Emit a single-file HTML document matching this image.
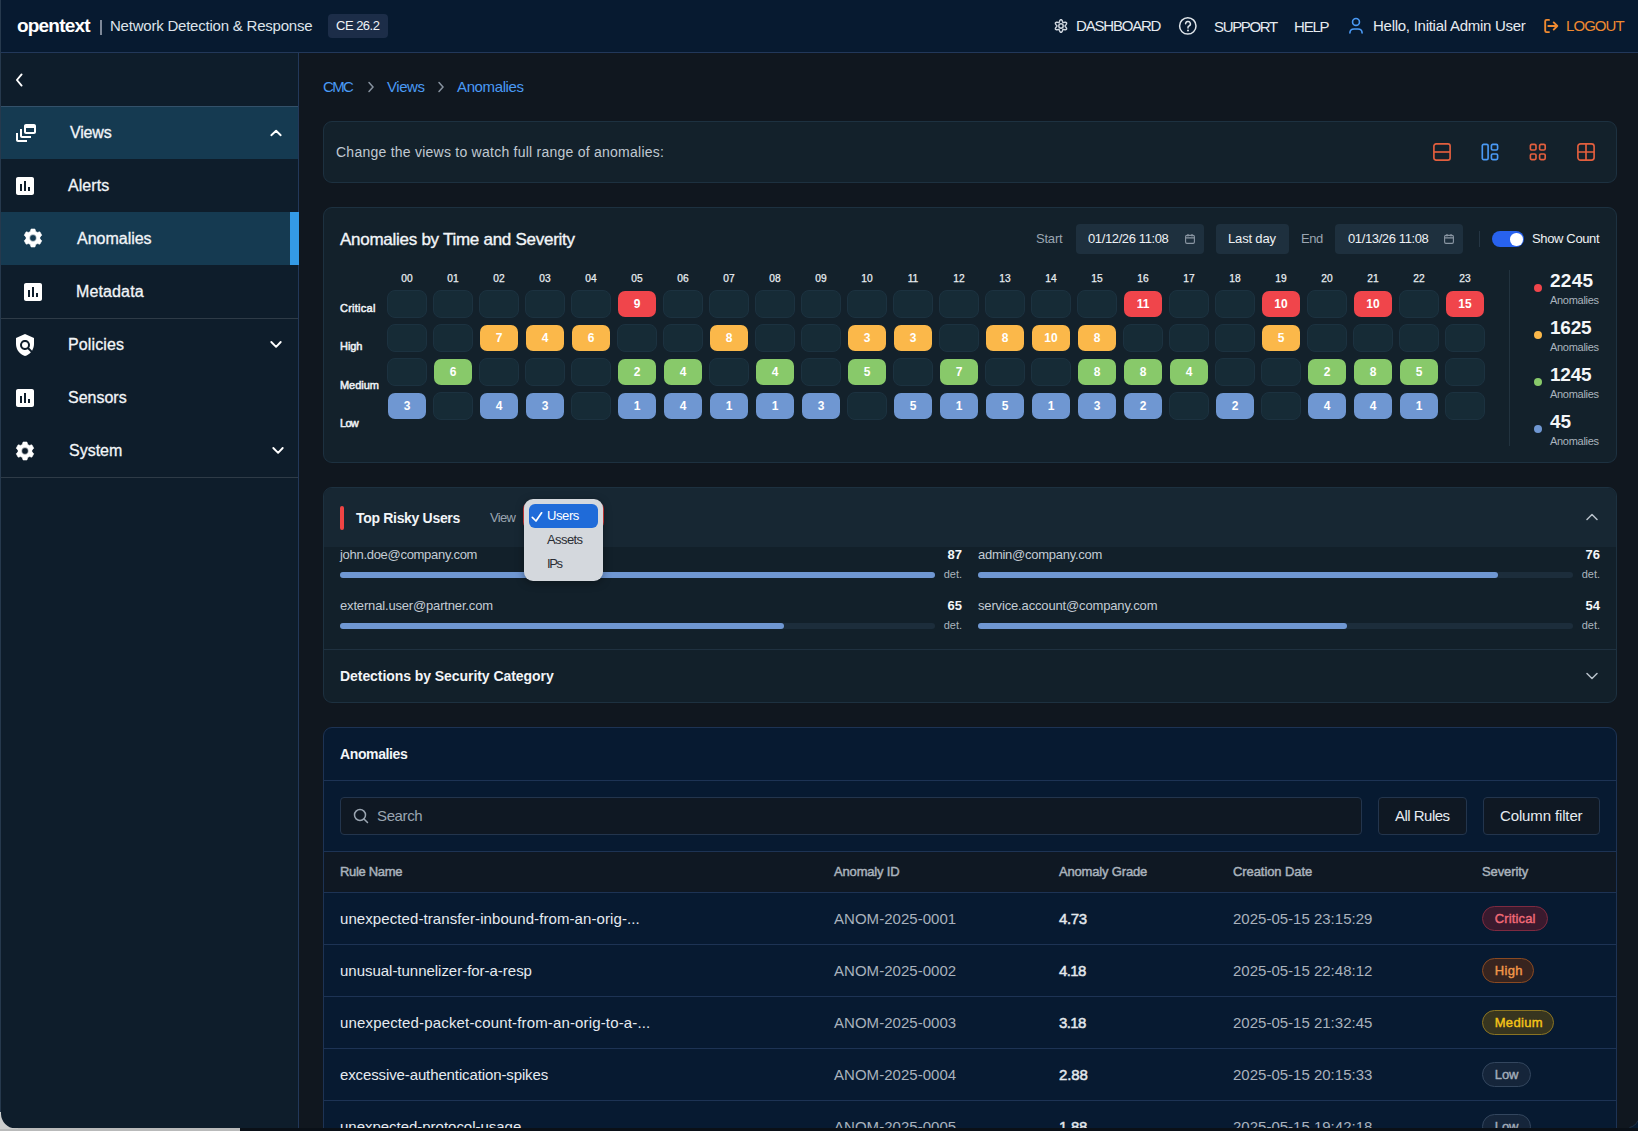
<!DOCTYPE html>
<html><head><meta charset="utf-8">
<style>
*{box-sizing:border-box;margin:0;padding:0}
html,body{width:1638px;height:1131px;overflow:hidden;background:#10171f;font-family:"Liberation Sans", sans-serif;color:#e6eaef}
.a{position:absolute}
.t{position:absolute;white-space:nowrap;line-height:1}
.cell{color:#fff;font-size:12px;font-weight:bold;text-align:center;line-height:26px}
</style></head><body>
<div class="a" style="left:0px;top:0px;width:1638px;height:52px;background:#071a30"></div>
<div class="a" style="left:0px;top:52px;width:1638px;height:1px;background:#22385a"></div>
<div class="t" id="t0" style="left:17px;top:16px;font-size:19px;color:#ffffff;font-weight:bold;letter-spacing:-0.807px;">opentext</div>
<div class="a" style="left:100px;top:20px;width:1.5px;height:15px;background:#7d8898"></div>
<div class="t" id="t1" style="left:110px;top:18px;font-size:15px;color:#dde3ea;font-weight:normal;letter-spacing:-0.218px;">Network Detection &amp; Response</div>
<div class="a" style="left:328px;top:14px;width:60px;height:24px;background:#1c2d48;border-radius:4px"></div>
<div class="t" id="t2" style="left:336px;top:19px;font-size:13px;color:#f0f3f6;font-weight:normal;letter-spacing:-0.507px;">CE 26.2</div>
<svg class="a" style="left:1053px;top:18px" width="16" height="16" viewBox="0 0 16 16"><path d="M12.05 8.00 L12.10 8.21 L12.25 8.45 L12.47 8.71 L12.74 9.01 L13.02 9.35 L13.28 9.72 L13.49 10.11 L13.60 10.49 L13.61 10.86 L13.50 11.17 L13.28 11.43 L12.96 11.60 L12.57 11.70 L12.13 11.72 L11.68 11.68 L11.24 11.60 L10.85 11.52 L10.51 11.45 L10.24 11.44 L10.03 11.51 L9.86 11.66 L9.74 11.90 L9.62 12.22 L9.50 12.61 L9.35 13.02 L9.16 13.43 L8.92 13.80 L8.64 14.10 L8.33 14.29 L8.00 14.35 L7.67 14.29 L7.36 14.10 L7.08 13.80 L6.84 13.43 L6.65 13.02 L6.50 12.61 L6.38 12.22 L6.26 11.90 L6.14 11.66 L5.98 11.51 L5.76 11.44 L5.49 11.45 L5.15 11.52 L4.76 11.60 L4.32 11.68 L3.87 11.72 L3.43 11.70 L3.04 11.60 L2.72 11.43 L2.50 11.17 L2.39 10.86 L2.40 10.49 L2.51 10.11 L2.72 9.72 L2.98 9.35 L3.26 9.01 L3.53 8.71 L3.75 8.45 L3.90 8.21 L3.95 8.00 L3.90 7.79 L3.75 7.55 L3.53 7.29 L3.26 6.99 L2.98 6.65 L2.72 6.28 L2.51 5.89 L2.40 5.51 L2.39 5.14 L2.50 4.83 L2.72 4.57 L3.04 4.40 L3.43 4.30 L3.87 4.28 L4.32 4.32 L4.76 4.40 L5.15 4.48 L5.49 4.55 L5.76 4.56 L5.97 4.49 L6.14 4.34 L6.26 4.10 L6.38 3.78 L6.50 3.39 L6.65 2.98 L6.84 2.57 L7.08 2.20 L7.36 1.90 L7.67 1.71 L8.00 1.65 L8.33 1.71 L8.64 1.90 L8.92 2.20 L9.16 2.57 L9.35 2.98 L9.50 3.39 L9.62 3.78 L9.74 4.10 L9.86 4.34 L10.03 4.49 L10.24 4.56 L10.51 4.55 L10.85 4.48 L11.24 4.40 L11.68 4.32 L12.13 4.28 L12.57 4.30 L12.96 4.40 L13.28 4.57 L13.50 4.83 L13.61 5.14 L13.60 5.51 L13.49 5.89 L13.28 6.28 L13.02 6.65 L12.74 6.99 L12.47 7.29 L12.25 7.55 L12.10 7.79Z" fill="none" stroke="#cfd6de" stroke-width="1.45" stroke-linejoin="round"/><circle cx="8" cy="8" r="2.2" fill="none" stroke="#cfd6de" stroke-width="1.45"/></svg>
<div class="t" id="t3" style="left:1076px;top:18px;font-size:15px;color:#e6ebf0;font-weight:normal;letter-spacing:-1.198px;">DASHBOARD</div>
<svg class="a" style="left:1178px;top:16px" width="20" height="20" viewBox="0 0 20 20"><circle cx="9.8" cy="9.9" r="8.2" fill="none" stroke="#dfe5ea" stroke-width="1.5"/><path d="M7.6 7.8a2.4 2.4 0 1 1 3.4 2.2c-.7.3-1 .8-1 1.5v.6" fill="none" stroke="#dfe5ea" stroke-width="1.5" stroke-linecap="round"/><circle cx="10" cy="14.6" r="1" fill="#dfe5ea"/></svg>
<div class="t" id="t4" style="left:1214px;top:19px;font-size:15px;color:#e6ebf0;font-weight:normal;letter-spacing:-1.346px;">SUPPORT</div>
<div class="t" id="t5" style="left:1294px;top:19px;font-size:15px;color:#e6ebf0;font-weight:normal;letter-spacing:-1.193px;">HELP</div>
<svg class="a" style="left:1346px;top:14px" width="20" height="22" viewBox="0 0 20 22"><circle cx="10" cy="7.9" r="3.45" fill="none" stroke="#4a9af5" stroke-width="1.6"/><path d="M3.9 19 C3.9 16.4 5.7 15 8.1 15 H11.9 C14.3 15 16.1 16.4 16.1 19" fill="none" stroke="#4a9af5" stroke-width="1.6" stroke-linecap="round"/></svg>
<div class="t" id="t6" style="left:1373px;top:18px;font-size:15px;color:#e6ebf0;font-weight:normal;letter-spacing:-0.265px;">Hello, Initial Admin User</div>
<svg class="a" style="left:1540px;top:14px" width="22" height="22" viewBox="0 0 22 22"><path d="M9 5.9H6.6A1.4 1.4 0 0 0 5.2 7.3V16.7A1.4 1.4 0 0 0 6.6 18.1H9" fill="none" stroke="#f08a30" stroke-width="1.9" stroke-linecap="round" stroke-linejoin="round"/><path d="M8.3 12H17.3M13.7 8.4 17.3 12 13.7 15.6" fill="none" stroke="#f08a30" stroke-width="1.9" stroke-linecap="round" stroke-linejoin="round"/></svg>
<div class="t" id="t7" style="left:1566px;top:18px;font-size:15px;color:#f08a30;font-weight:normal;letter-spacing:-0.935px;">LOGOUT</div>
<div class="a" style="left:0px;top:53px;width:298px;height:1078px;background:#0e1d2b"></div>
<div class="a" style="left:298px;top:53px;width:1px;height:1078px;background:#22385a"></div>
<svg class="a" style="left:13px;top:72px" width="14" height="16" viewBox="0 0 14 16"><path d="M8.6 2.4 3.9 8l4.7 5.6" fill="none" stroke="#fff" stroke-width="1.9" stroke-linecap="round" stroke-linejoin="round"/></svg>
<div class="a" style="left:0px;top:106px;width:298px;height:1px;background:#33516a"></div>
<div class="a" style="left:0px;top:107px;width:298px;height:52px;background:#153a51"></div>
<div class="a" style="left:0px;top:212px;width:290px;height:53px;background:#153a51"></div>
<div class="a" style="left:290px;top:212px;width:9px;height:53px;background:#349ae6"></div>
<div class="a" style="left:0px;top:318px;width:298px;height:1px;background:#2e3b47"></div>
<div class="a" style="left:0px;top:477px;width:298px;height:1px;background:#2e3b47"></div>
<svg class="a" style="left:14px;top:121px" width="24" height="24" viewBox="0 0 24 24"><path fill="#fff" d="M8 8H6v7c0 1.1.9 2 2 2h9v-2H8V8zM20 3h-8c-1.1 0-2 .9-2 2v6c0 1.1.9 2 2 2h8c1.1 0 2-.9 2-2V5c0-1.1-.9-2-2-2zm0 8h-8V7h8v4zM4 12H2v7c0 1.1.9 2 2 2h9v-2H4v-7z"/></svg>
<svg class="a" style="left:13px;top:174px" width="24" height="24" viewBox="0 0 24 24"><path fill="#fff" d="M19 3H5c-1.1 0-2 .9-2 2v14c0 1.1.9 2 2 2h14c1.1 0 2-.9 2-2V5c0-1.1-.9-2-2-2zM9 17H7v-7h2v7zm4 0h-2V7h2v10zm4 0h-2v-4h2v4z"/></svg>
<svg class="a" style="left:21px;top:280px" width="24" height="24" viewBox="0 0 24 24"><path fill="#fff" d="M19 3H5c-1.1 0-2 .9-2 2v14c0 1.1.9 2 2 2h14c1.1 0 2-.9 2-2V5c0-1.1-.9-2-2-2zM9 17H7v-7h2v7zm4 0h-2V7h2v10zm4 0h-2v-4h2v4z"/></svg>
<svg class="a" style="left:13px;top:386px" width="24" height="24" viewBox="0 0 24 24"><path fill="#fff" d="M19 3H5c-1.1 0-2 .9-2 2v14c0 1.1.9 2 2 2h14c1.1 0 2-.9 2-2V5c0-1.1-.9-2-2-2zM9 17H7v-7h2v7zm4 0h-2V7h2v10zm4 0h-2v-4h2v4z"/></svg>
<svg class="a" style="left:23.3px;top:228.4px" width="20" height="20" viewBox="0 0 20 20"><path fill="#fff" fill-rule="evenodd" stroke="#fff" stroke-width="0.6" stroke-linejoin="round" d="M7.26 3.56 L8.09 1.00 L11.91 1.00 L12.74 3.56 L13.00 3.67 L13.25 3.80 L13.50 3.94 L13.74 4.09 L13.98 4.24 L14.21 4.41 L16.84 3.84 L18.75 7.16 L16.95 9.15 L16.98 9.43 L16.99 9.72 L17.00 10.00 L16.99 10.28 L16.98 10.57 L16.95 10.85 L18.75 12.84 L16.84 16.16 L14.21 15.59 L13.98 15.76 L13.74 15.91 L13.50 16.06 L13.25 16.20 L13.00 16.33 L12.74 16.44 L11.91 19.00 L8.09 19.00 L7.26 16.44 L7.00 16.33 L6.75 16.20 L6.50 16.06 L6.26 15.91 L6.02 15.76 L5.79 15.59 L3.16 16.16 L1.25 12.84 L3.05 10.85 L3.02 10.57 L3.01 10.28 L3.00 10.00 L3.01 9.72 L3.02 9.43 L3.05 9.15 L1.25 7.16 L3.16 3.84 L5.79 4.41 L6.02 4.24 L6.26 4.09 L6.50 3.94 L6.75 3.80 L7.00 3.67Z M13.4 10 A3.4 3.4 0 1 0 6.6 10 A3.4 3.4 0 1 0 13.4 10Z"/></svg>
<svg class="a" style="left:15px;top:440.5px" width="20" height="20" viewBox="0 0 20 20"><path fill="#fff" fill-rule="evenodd" stroke="#fff" stroke-width="0.6" stroke-linejoin="round" d="M7.26 3.56 L8.09 1.00 L11.91 1.00 L12.74 3.56 L13.00 3.67 L13.25 3.80 L13.50 3.94 L13.74 4.09 L13.98 4.24 L14.21 4.41 L16.84 3.84 L18.75 7.16 L16.95 9.15 L16.98 9.43 L16.99 9.72 L17.00 10.00 L16.99 10.28 L16.98 10.57 L16.95 10.85 L18.75 12.84 L16.84 16.16 L14.21 15.59 L13.98 15.76 L13.74 15.91 L13.50 16.06 L13.25 16.20 L13.00 16.33 L12.74 16.44 L11.91 19.00 L8.09 19.00 L7.26 16.44 L7.00 16.33 L6.75 16.20 L6.50 16.06 L6.26 15.91 L6.02 15.76 L5.79 15.59 L3.16 16.16 L1.25 12.84 L3.05 10.85 L3.02 10.57 L3.01 10.28 L3.00 10.00 L3.01 9.72 L3.02 9.43 L3.05 9.15 L1.25 7.16 L3.16 3.84 L5.79 4.41 L6.02 4.24 L6.26 4.09 L6.50 3.94 L6.75 3.80 L7.00 3.67Z M13.4 10 A3.4 3.4 0 1 0 6.6 10 A3.4 3.4 0 1 0 13.4 10Z"/></svg>
<svg class="a" style="left:12.8px;top:333px" width="24" height="24" viewBox="0 0 24 24"><path fill="#fff" d="M21 5l-9-4-9 4v6c0 5.55 3.84 10.74 9 12 2.3-.56 4.33-1.9 5.88-3.71l-3.12-3.12c-1.94 1.29-4.58 1.07-6.29-.64-1.95-1.95-1.95-5.12 0-7.07 1.95-1.95 5.12-1.95 7.07 0 1.71 1.71 1.92 4.35.64 6.29l2.9 2.9C20.29 15.69 21 13.38 21 11V5z"/><circle fill="#fff" cx="12" cy="12" r="3"/></svg>
<svg class="a" style="left:269px;top:128px" width="14" height="9" viewBox="0 0 14 9"><path d="M2.3 7.2 7.1 2.7 11.7 7.2" fill="none" stroke="#fff" stroke-width="1.9" stroke-linecap="round" stroke-linejoin="round"/></svg>
<svg class="a" style="left:269px;top:340px" width="14" height="9" viewBox="0 0 14 9"><path d="M2.3 2 7.1 6.8 11.7 2" fill="none" stroke="#fff" stroke-width="1.9" stroke-linecap="round" stroke-linejoin="round"/></svg>
<svg class="a" style="left:271px;top:446px" width="14" height="9" viewBox="0 0 14 9"><path d="M2.3 2 7.1 6.8 11.7 2" fill="none" stroke="#fff" stroke-width="1.9" stroke-linecap="round" stroke-linejoin="round"/></svg>
<div class="t" id="t8" style="left:70px;top:125px;font-size:16px;color:#f2f5f8;font-weight:normal;-webkit-text-stroke:0.3px #f2f5f8;letter-spacing:-0.173px;">Views</div>
<div class="t" id="t9" style="left:68px;top:178px;font-size:16px;color:#f2f5f8;font-weight:normal;-webkit-text-stroke:0.3px #f2f5f8;letter-spacing:0.060px;">Alerts</div>
<div class="t" id="t10" style="left:77px;top:231px;font-size:16px;color:#f2f5f8;font-weight:normal;-webkit-text-stroke:0.3px #f2f5f8;letter-spacing:-0.013px;">Anomalies</div>
<div class="t" id="t11" style="left:76px;top:284px;font-size:16px;color:#f2f5f8;font-weight:normal;-webkit-text-stroke:0.3px #f2f5f8;letter-spacing:0.127px;">Metadata</div>
<div class="t" id="t12" style="left:68px;top:337px;font-size:16px;color:#f2f5f8;font-weight:normal;-webkit-text-stroke:0.3px #f2f5f8;letter-spacing:0.127px;">Policies</div>
<div class="t" id="t13" style="left:68px;top:390px;font-size:16px;color:#f2f5f8;font-weight:normal;-webkit-text-stroke:0.3px #f2f5f8;">Sensors</div>
<div class="t" id="t14" style="left:69px;top:443px;font-size:16px;color:#f2f5f8;font-weight:normal;-webkit-text-stroke:0.3px #f2f5f8;">System</div>
<div class="t" id="t15" style="left:323px;top:79px;font-size:15px;color:#4a9af5;font-weight:normal;letter-spacing:-1.664px;">CMC</div>
<svg class="a" style="left:367px;top:81px" width="8" height="12" viewBox="0 0 8 12"><path d="M2 1.5 6 6l-4 4.5" fill="none" stroke="#8893a0" stroke-width="1.5" stroke-linecap="round"/></svg>
<div class="t" id="t16" style="left:387px;top:79px;font-size:15px;color:#4a9af5;font-weight:normal;letter-spacing:-0.435px;">Views</div>
<svg class="a" style="left:437px;top:81px" width="8" height="12" viewBox="0 0 8 12"><path d="M2 1.5 6 6l-4 4.5" fill="none" stroke="#8893a0" stroke-width="1.5" stroke-linecap="round"/></svg>
<div class="t" id="t17" style="left:457px;top:79px;font-size:15px;color:#4a9af5;font-weight:normal;letter-spacing:-0.379px;">Anomalies</div>
<div class="a" style="left:323px;top:121px;width:1294px;height:62px;background:#13212b;border:1px solid #1d3140;border-radius:9px"></div>
<div class="t" id="t18" style="left:336px;top:145px;font-size:14px;color:#c0c9d2;font-weight:normal;letter-spacing:0.244px;">Change the views to watch full range of anomalies:</div>
<svg class="a" style="left:1433px;top:143px" width="18" height="18" viewBox="0 0 18 18"><rect x="0.9" y="0.9" width="16.2" height="16.2" rx="2.2" fill="none" stroke="#e35f3e" stroke-width="1.65"/><path d="M1 9h16" stroke="#e35f3e" stroke-width="1.65"/></svg>
<svg class="a" style="left:1481px;top:143px" width="18" height="18" viewBox="0 0 18 18"><rect x="1.3" y="1.4" width="5.8" height="15.2" rx="1.4" fill="none" stroke="#4a9af5" stroke-width="1.65"/><rect x="10.4" y="1.4" width="6.2" height="5.6" rx="1.3" fill="none" stroke="#4a9af5" stroke-width="1.65"/><rect x="10.4" y="11" width="6.2" height="5.6" rx="1.3" fill="none" stroke="#4a9af5" stroke-width="1.65"/></svg>
<svg class="a" style="left:1529px;top:143px" width="18" height="18" viewBox="0 0 18 18"><rect x="1.4" y="1.4" width="5.6" height="5.6" rx="1.3" fill="none" stroke="#e35f3e" stroke-width="1.65"/><rect x="10.6" y="1.4" width="5.6" height="5.6" rx="1.3" fill="none" stroke="#e35f3e" stroke-width="1.65"/><rect x="1.4" y="11" width="5.6" height="5.6" rx="1.3" fill="none" stroke="#e35f3e" stroke-width="1.65"/><rect x="10.6" y="11" width="5.6" height="5.6" rx="1.3" fill="none" stroke="#e35f3e" stroke-width="1.65"/></svg>
<svg class="a" style="left:1577px;top:143px" width="18" height="18" viewBox="0 0 18 18"><rect x="0.9" y="0.9" width="16.2" height="16.2" rx="2.6" fill="none" stroke="#e35f3e" stroke-width="1.65"/><path d="M1 9h16M9 1v16" stroke="#e35f3e" stroke-width="1.65"/></svg>
<div class="a" style="left:323px;top:207px;width:1294px;height:256px;background:#13212b;border:1px solid #1d3140;border-radius:9px"></div>
<div class="t" id="t19" style="left:340px;top:231px;font-size:17px;color:#f2f5f8;font-weight:normal;-webkit-text-stroke:0.35px #f2f5f8;letter-spacing:-0.270px;">Anomalies by Time and Severity</div>
<div class="t" id="t20" style="left:1036px;top:232px;font-size:13px;color:#9aa5b1;font-weight:normal;letter-spacing:-0.210px;">Start</div>
<div class="a" style="left:1076px;top:224px;width:128px;height:30px;background:#1e303e;border-radius:4px"></div>
<div class="t" id="t21" style="left:1088px;top:232px;font-size:13px;color:#eef1f4;font-weight:normal;letter-spacing:-0.381px;">01/12/26 11:08</div>
<svg class="a" style="left:1184px;top:233px" width="12" height="12" viewBox="0 0 12 12"><rect x="1.6" y="2.4" width="8.8" height="8" rx="1.3" fill="none" stroke="#8a96a3" stroke-width="1.1"/><path d="M1.6 4.9h8.8M4 1v2.4M8 1v2.4" stroke="#8a96a3" stroke-width="1.1"/></svg>
<div class="a" style="left:1216px;top:224px;width:73px;height:30px;background:#1e303e;border-radius:4px"></div>
<div class="t" id="t22" style="left:1228px;top:232px;font-size:13px;color:#eef1f4;font-weight:normal;letter-spacing:-0.163px;">Last day</div>
<div class="t" id="t23" style="left:1301px;top:232px;font-size:13px;color:#9aa5b1;font-weight:normal;letter-spacing:-0.450px;">End</div>
<div class="a" style="left:1335px;top:224px;width:128px;height:30px;background:#1e303e;border-radius:4px"></div>
<div class="t" id="t24" style="left:1348px;top:232px;font-size:13px;color:#eef1f4;font-weight:normal;letter-spacing:-0.381px;">01/13/26 11:08</div>
<svg class="a" style="left:1443px;top:233px" width="12" height="12" viewBox="0 0 12 12"><rect x="1.6" y="2.4" width="8.8" height="8" rx="1.3" fill="none" stroke="#8a96a3" stroke-width="1.1"/><path d="M1.6 4.9h8.8M4 1v2.4M8 1v2.4" stroke="#8a96a3" stroke-width="1.1"/></svg>
<div class="a" style="left:1479px;top:231px;width:1px;height:16px;background:#253644"></div>
<div class="a" style="left:1492px;top:231px;width:32px;height:16px;background:#2862ee;border-radius:8px"></div>
<div class="a" style="left:1510px;top:233px;width:12.5px;height:12.5px;background:#fff;border-radius:6.25px"></div>
<div class="t" id="t25" style="left:1532px;top:232px;font-size:13px;color:#eef1f4;font-weight:normal;letter-spacing:-0.357px;">Show Count</div>
<div class="t" style="left:387px;top:274px;width:40px;text-align:center;font-size:10.2px;color:#e9edf1;-webkit-text-stroke:0.25px #e9edf1">00</div>
<div class="t" style="left:433px;top:274px;width:40px;text-align:center;font-size:10.2px;color:#e9edf1;-webkit-text-stroke:0.25px #e9edf1">01</div>
<div class="t" style="left:479px;top:274px;width:40px;text-align:center;font-size:10.2px;color:#e9edf1;-webkit-text-stroke:0.25px #e9edf1">02</div>
<div class="t" style="left:525px;top:274px;width:40px;text-align:center;font-size:10.2px;color:#e9edf1;-webkit-text-stroke:0.25px #e9edf1">03</div>
<div class="t" style="left:571px;top:274px;width:40px;text-align:center;font-size:10.2px;color:#e9edf1;-webkit-text-stroke:0.25px #e9edf1">04</div>
<div class="t" style="left:617px;top:274px;width:40px;text-align:center;font-size:10.2px;color:#e9edf1;-webkit-text-stroke:0.25px #e9edf1">05</div>
<div class="t" style="left:663px;top:274px;width:40px;text-align:center;font-size:10.2px;color:#e9edf1;-webkit-text-stroke:0.25px #e9edf1">06</div>
<div class="t" style="left:709px;top:274px;width:40px;text-align:center;font-size:10.2px;color:#e9edf1;-webkit-text-stroke:0.25px #e9edf1">07</div>
<div class="t" style="left:755px;top:274px;width:40px;text-align:center;font-size:10.2px;color:#e9edf1;-webkit-text-stroke:0.25px #e9edf1">08</div>
<div class="t" style="left:801px;top:274px;width:40px;text-align:center;font-size:10.2px;color:#e9edf1;-webkit-text-stroke:0.25px #e9edf1">09</div>
<div class="t" style="left:847px;top:274px;width:40px;text-align:center;font-size:10.2px;color:#e9edf1;-webkit-text-stroke:0.25px #e9edf1">10</div>
<div class="t" style="left:893px;top:274px;width:40px;text-align:center;font-size:10.2px;color:#e9edf1;-webkit-text-stroke:0.25px #e9edf1">11</div>
<div class="t" style="left:939px;top:274px;width:40px;text-align:center;font-size:10.2px;color:#e9edf1;-webkit-text-stroke:0.25px #e9edf1">12</div>
<div class="t" style="left:985px;top:274px;width:40px;text-align:center;font-size:10.2px;color:#e9edf1;-webkit-text-stroke:0.25px #e9edf1">13</div>
<div class="t" style="left:1031px;top:274px;width:40px;text-align:center;font-size:10.2px;color:#e9edf1;-webkit-text-stroke:0.25px #e9edf1">14</div>
<div class="t" style="left:1077px;top:274px;width:40px;text-align:center;font-size:10.2px;color:#e9edf1;-webkit-text-stroke:0.25px #e9edf1">15</div>
<div class="t" style="left:1123px;top:274px;width:40px;text-align:center;font-size:10.2px;color:#e9edf1;-webkit-text-stroke:0.25px #e9edf1">16</div>
<div class="t" style="left:1169px;top:274px;width:40px;text-align:center;font-size:10.2px;color:#e9edf1;-webkit-text-stroke:0.25px #e9edf1">17</div>
<div class="t" style="left:1215px;top:274px;width:40px;text-align:center;font-size:10.2px;color:#e9edf1;-webkit-text-stroke:0.25px #e9edf1">18</div>
<div class="t" style="left:1261px;top:274px;width:40px;text-align:center;font-size:10.2px;color:#e9edf1;-webkit-text-stroke:0.25px #e9edf1">19</div>
<div class="t" style="left:1307px;top:274px;width:40px;text-align:center;font-size:10.2px;color:#e9edf1;-webkit-text-stroke:0.25px #e9edf1">20</div>
<div class="t" style="left:1353px;top:274px;width:40px;text-align:center;font-size:10.2px;color:#e9edf1;-webkit-text-stroke:0.25px #e9edf1">21</div>
<div class="t" style="left:1399px;top:274px;width:40px;text-align:center;font-size:10.2px;color:#e9edf1;-webkit-text-stroke:0.25px #e9edf1">22</div>
<div class="t" style="left:1445px;top:274px;width:40px;text-align:center;font-size:10.2px;color:#e9edf1;-webkit-text-stroke:0.25px #e9edf1">23</div>
<div class="a" style="left:387px;top:290px;width:40px;height:28px;background:#162b36;border:1px solid #1c3240;border-radius:8px"></div>
<div class="a" style="left:433px;top:290px;width:40px;height:28px;background:#162b36;border:1px solid #1c3240;border-radius:8px"></div>
<div class="a" style="left:479px;top:290px;width:40px;height:28px;background:#162b36;border:1px solid #1c3240;border-radius:8px"></div>
<div class="a" style="left:525px;top:290px;width:40px;height:28px;background:#162b36;border:1px solid #1c3240;border-radius:8px"></div>
<div class="a" style="left:571px;top:290px;width:40px;height:28px;background:#162b36;border:1px solid #1c3240;border-radius:8px"></div>
<div class="a cell" style="left:618px;top:291px;width:38px;height:26px;background:#f0454b;border-radius:7px">9</div>
<div class="a" style="left:663px;top:290px;width:40px;height:28px;background:#162b36;border:1px solid #1c3240;border-radius:8px"></div>
<div class="a" style="left:709px;top:290px;width:40px;height:28px;background:#162b36;border:1px solid #1c3240;border-radius:8px"></div>
<div class="a" style="left:755px;top:290px;width:40px;height:28px;background:#162b36;border:1px solid #1c3240;border-radius:8px"></div>
<div class="a" style="left:801px;top:290px;width:40px;height:28px;background:#162b36;border:1px solid #1c3240;border-radius:8px"></div>
<div class="a" style="left:847px;top:290px;width:40px;height:28px;background:#162b36;border:1px solid #1c3240;border-radius:8px"></div>
<div class="a" style="left:893px;top:290px;width:40px;height:28px;background:#162b36;border:1px solid #1c3240;border-radius:8px"></div>
<div class="a" style="left:939px;top:290px;width:40px;height:28px;background:#162b36;border:1px solid #1c3240;border-radius:8px"></div>
<div class="a" style="left:985px;top:290px;width:40px;height:28px;background:#162b36;border:1px solid #1c3240;border-radius:8px"></div>
<div class="a" style="left:1031px;top:290px;width:40px;height:28px;background:#162b36;border:1px solid #1c3240;border-radius:8px"></div>
<div class="a" style="left:1077px;top:290px;width:40px;height:28px;background:#162b36;border:1px solid #1c3240;border-radius:8px"></div>
<div class="a cell" style="left:1124px;top:291px;width:38px;height:26px;background:#f0454b;border-radius:7px">11</div>
<div class="a" style="left:1169px;top:290px;width:40px;height:28px;background:#162b36;border:1px solid #1c3240;border-radius:8px"></div>
<div class="a" style="left:1215px;top:290px;width:40px;height:28px;background:#162b36;border:1px solid #1c3240;border-radius:8px"></div>
<div class="a cell" style="left:1262px;top:291px;width:38px;height:26px;background:#f0454b;border-radius:7px">10</div>
<div class="a" style="left:1307px;top:290px;width:40px;height:28px;background:#162b36;border:1px solid #1c3240;border-radius:8px"></div>
<div class="a cell" style="left:1354px;top:291px;width:38px;height:26px;background:#f0454b;border-radius:7px">10</div>
<div class="a" style="left:1399px;top:290px;width:40px;height:28px;background:#162b36;border:1px solid #1c3240;border-radius:8px"></div>
<div class="a cell" style="left:1446px;top:291px;width:38px;height:26px;background:#f0454b;border-radius:7px">15</div>
<div class="a" style="left:387px;top:324px;width:40px;height:28px;background:#162b36;border:1px solid #1c3240;border-radius:8px"></div>
<div class="a" style="left:433px;top:324px;width:40px;height:28px;background:#162b36;border:1px solid #1c3240;border-radius:8px"></div>
<div class="a cell" style="left:480px;top:325px;width:38px;height:26px;background:#fbb84a;border-radius:7px">7</div>
<div class="a cell" style="left:526px;top:325px;width:38px;height:26px;background:#fbb84a;border-radius:7px">4</div>
<div class="a cell" style="left:572px;top:325px;width:38px;height:26px;background:#fbb84a;border-radius:7px">6</div>
<div class="a" style="left:617px;top:324px;width:40px;height:28px;background:#162b36;border:1px solid #1c3240;border-radius:8px"></div>
<div class="a" style="left:663px;top:324px;width:40px;height:28px;background:#162b36;border:1px solid #1c3240;border-radius:8px"></div>
<div class="a cell" style="left:710px;top:325px;width:38px;height:26px;background:#fbb84a;border-radius:7px">8</div>
<div class="a" style="left:755px;top:324px;width:40px;height:28px;background:#162b36;border:1px solid #1c3240;border-radius:8px"></div>
<div class="a" style="left:801px;top:324px;width:40px;height:28px;background:#162b36;border:1px solid #1c3240;border-radius:8px"></div>
<div class="a cell" style="left:848px;top:325px;width:38px;height:26px;background:#fbb84a;border-radius:7px">3</div>
<div class="a cell" style="left:894px;top:325px;width:38px;height:26px;background:#fbb84a;border-radius:7px">3</div>
<div class="a" style="left:939px;top:324px;width:40px;height:28px;background:#162b36;border:1px solid #1c3240;border-radius:8px"></div>
<div class="a cell" style="left:986px;top:325px;width:38px;height:26px;background:#fbb84a;border-radius:7px">8</div>
<div class="a cell" style="left:1032px;top:325px;width:38px;height:26px;background:#fbb84a;border-radius:7px">10</div>
<div class="a cell" style="left:1078px;top:325px;width:38px;height:26px;background:#fbb84a;border-radius:7px">8</div>
<div class="a" style="left:1123px;top:324px;width:40px;height:28px;background:#162b36;border:1px solid #1c3240;border-radius:8px"></div>
<div class="a" style="left:1169px;top:324px;width:40px;height:28px;background:#162b36;border:1px solid #1c3240;border-radius:8px"></div>
<div class="a" style="left:1215px;top:324px;width:40px;height:28px;background:#162b36;border:1px solid #1c3240;border-radius:8px"></div>
<div class="a cell" style="left:1262px;top:325px;width:38px;height:26px;background:#fbb84a;border-radius:7px">5</div>
<div class="a" style="left:1307px;top:324px;width:40px;height:28px;background:#162b36;border:1px solid #1c3240;border-radius:8px"></div>
<div class="a" style="left:1353px;top:324px;width:40px;height:28px;background:#162b36;border:1px solid #1c3240;border-radius:8px"></div>
<div class="a" style="left:1399px;top:324px;width:40px;height:28px;background:#162b36;border:1px solid #1c3240;border-radius:8px"></div>
<div class="a" style="left:1445px;top:324px;width:40px;height:28px;background:#162b36;border:1px solid #1c3240;border-radius:8px"></div>
<div class="a" style="left:387px;top:358px;width:40px;height:28px;background:#162b36;border:1px solid #1c3240;border-radius:8px"></div>
<div class="a cell" style="left:434px;top:359px;width:38px;height:26px;background:#88c96a;border-radius:7px">6</div>
<div class="a" style="left:479px;top:358px;width:40px;height:28px;background:#162b36;border:1px solid #1c3240;border-radius:8px"></div>
<div class="a" style="left:525px;top:358px;width:40px;height:28px;background:#162b36;border:1px solid #1c3240;border-radius:8px"></div>
<div class="a" style="left:571px;top:358px;width:40px;height:28px;background:#162b36;border:1px solid #1c3240;border-radius:8px"></div>
<div class="a cell" style="left:618px;top:359px;width:38px;height:26px;background:#88c96a;border-radius:7px">2</div>
<div class="a cell" style="left:664px;top:359px;width:38px;height:26px;background:#88c96a;border-radius:7px">4</div>
<div class="a" style="left:709px;top:358px;width:40px;height:28px;background:#162b36;border:1px solid #1c3240;border-radius:8px"></div>
<div class="a cell" style="left:756px;top:359px;width:38px;height:26px;background:#88c96a;border-radius:7px">4</div>
<div class="a" style="left:801px;top:358px;width:40px;height:28px;background:#162b36;border:1px solid #1c3240;border-radius:8px"></div>
<div class="a cell" style="left:848px;top:359px;width:38px;height:26px;background:#88c96a;border-radius:7px">5</div>
<div class="a" style="left:893px;top:358px;width:40px;height:28px;background:#162b36;border:1px solid #1c3240;border-radius:8px"></div>
<div class="a cell" style="left:940px;top:359px;width:38px;height:26px;background:#88c96a;border-radius:7px">7</div>
<div class="a" style="left:985px;top:358px;width:40px;height:28px;background:#162b36;border:1px solid #1c3240;border-radius:8px"></div>
<div class="a" style="left:1031px;top:358px;width:40px;height:28px;background:#162b36;border:1px solid #1c3240;border-radius:8px"></div>
<div class="a cell" style="left:1078px;top:359px;width:38px;height:26px;background:#88c96a;border-radius:7px">8</div>
<div class="a cell" style="left:1124px;top:359px;width:38px;height:26px;background:#88c96a;border-radius:7px">8</div>
<div class="a cell" style="left:1170px;top:359px;width:38px;height:26px;background:#88c96a;border-radius:7px">4</div>
<div class="a" style="left:1215px;top:358px;width:40px;height:28px;background:#162b36;border:1px solid #1c3240;border-radius:8px"></div>
<div class="a" style="left:1261px;top:358px;width:40px;height:28px;background:#162b36;border:1px solid #1c3240;border-radius:8px"></div>
<div class="a cell" style="left:1308px;top:359px;width:38px;height:26px;background:#88c96a;border-radius:7px">2</div>
<div class="a cell" style="left:1354px;top:359px;width:38px;height:26px;background:#88c96a;border-radius:7px">8</div>
<div class="a cell" style="left:1400px;top:359px;width:38px;height:26px;background:#88c96a;border-radius:7px">5</div>
<div class="a" style="left:1445px;top:358px;width:40px;height:28px;background:#162b36;border:1px solid #1c3240;border-radius:8px"></div>
<div class="a cell" style="left:388px;top:393px;width:38px;height:26px;background:#6f97d2;border-radius:7px">3</div>
<div class="a" style="left:433px;top:392px;width:40px;height:28px;background:#162b36;border:1px solid #1c3240;border-radius:8px"></div>
<div class="a cell" style="left:480px;top:393px;width:38px;height:26px;background:#6f97d2;border-radius:7px">4</div>
<div class="a cell" style="left:526px;top:393px;width:38px;height:26px;background:#6f97d2;border-radius:7px">3</div>
<div class="a" style="left:571px;top:392px;width:40px;height:28px;background:#162b36;border:1px solid #1c3240;border-radius:8px"></div>
<div class="a cell" style="left:618px;top:393px;width:38px;height:26px;background:#6f97d2;border-radius:7px">1</div>
<div class="a cell" style="left:664px;top:393px;width:38px;height:26px;background:#6f97d2;border-radius:7px">4</div>
<div class="a cell" style="left:710px;top:393px;width:38px;height:26px;background:#6f97d2;border-radius:7px">1</div>
<div class="a cell" style="left:756px;top:393px;width:38px;height:26px;background:#6f97d2;border-radius:7px">1</div>
<div class="a cell" style="left:802px;top:393px;width:38px;height:26px;background:#6f97d2;border-radius:7px">3</div>
<div class="a" style="left:847px;top:392px;width:40px;height:28px;background:#162b36;border:1px solid #1c3240;border-radius:8px"></div>
<div class="a cell" style="left:894px;top:393px;width:38px;height:26px;background:#6f97d2;border-radius:7px">5</div>
<div class="a cell" style="left:940px;top:393px;width:38px;height:26px;background:#6f97d2;border-radius:7px">1</div>
<div class="a cell" style="left:986px;top:393px;width:38px;height:26px;background:#6f97d2;border-radius:7px">5</div>
<div class="a cell" style="left:1032px;top:393px;width:38px;height:26px;background:#6f97d2;border-radius:7px">1</div>
<div class="a cell" style="left:1078px;top:393px;width:38px;height:26px;background:#6f97d2;border-radius:7px">3</div>
<div class="a cell" style="left:1124px;top:393px;width:38px;height:26px;background:#6f97d2;border-radius:7px">2</div>
<div class="a" style="left:1169px;top:392px;width:40px;height:28px;background:#162b36;border:1px solid #1c3240;border-radius:8px"></div>
<div class="a cell" style="left:1216px;top:393px;width:38px;height:26px;background:#6f97d2;border-radius:7px">2</div>
<div class="a" style="left:1261px;top:392px;width:40px;height:28px;background:#162b36;border:1px solid #1c3240;border-radius:8px"></div>
<div class="a cell" style="left:1308px;top:393px;width:38px;height:26px;background:#6f97d2;border-radius:7px">4</div>
<div class="a cell" style="left:1354px;top:393px;width:38px;height:26px;background:#6f97d2;border-radius:7px">4</div>
<div class="a cell" style="left:1400px;top:393px;width:38px;height:26px;background:#6f97d2;border-radius:7px">1</div>
<div class="a" style="left:1445px;top:392px;width:40px;height:28px;background:#162b36;border:1px solid #1c3240;border-radius:8px"></div>
<div class="t" id="t26" style="left:340px;top:303px;font-size:11px;color:#eef1f4;font-weight:normal;-webkit-text-stroke:0.5px #eef1f4;letter-spacing:0.247px;">Critical</div>
<div class="t" id="t27" style="left:340px;top:341px;font-size:11px;color:#eef1f4;font-weight:normal;-webkit-text-stroke:0.5px #eef1f4;letter-spacing:-0.068px;">High</div>
<div class="t" id="t28" style="left:340px;top:380px;font-size:11px;color:#eef1f4;font-weight:normal;-webkit-text-stroke:0.5px #eef1f4;letter-spacing:-0.052px;">Medium</div>
<div class="t" id="t29" style="left:340px;top:418px;font-size:11px;color:#eef1f4;font-weight:normal;-webkit-text-stroke:0.5px #eef1f4;letter-spacing:-0.718px;">Low</div>
<div class="a" style="left:1509px;top:270px;width:1px;height:176px;background:#22333f"></div>
<div class="a" style="left:1534px;top:284px;width:8px;height:8px;background:#f0454b;border-radius:4px"></div>
<div class="t" id="t30" style="left:1550px;top:271px;font-size:19px;color:#f4f6f8;font-weight:bold;letter-spacing:0.300px;">2245</div>
<div class="t" id="t31" style="left:1550px;top:295px;font-size:11px;color:#aab4be;font-weight:normal;letter-spacing:-0.295px;">Anomalies</div>
<div class="a" style="left:1534px;top:331px;width:8px;height:8px;background:#fbb84a;border-radius:4px"></div>
<div class="t" id="t32" style="left:1550px;top:318px;font-size:19px;color:#f4f6f8;font-weight:bold;letter-spacing:-0.234px;">1625</div>
<div class="t" id="t33" style="left:1550px;top:342px;font-size:11px;color:#aab4be;font-weight:normal;letter-spacing:-0.295px;">Anomalies</div>
<div class="a" style="left:1534px;top:378px;width:8px;height:8px;background:#88c96a;border-radius:4px"></div>
<div class="t" id="t34" style="left:1550px;top:365px;font-size:19px;color:#f4f6f8;font-weight:bold;letter-spacing:-0.234px;">1245</div>
<div class="t" id="t35" style="left:1550px;top:389px;font-size:11px;color:#aab4be;font-weight:normal;letter-spacing:-0.295px;">Anomalies</div>
<div class="a" style="left:1534px;top:425px;width:8px;height:8px;background:#6f97d2;border-radius:4px"></div>
<div class="t" id="t36" style="left:1550px;top:412px;font-size:19px;color:#f4f6f8;font-weight:bold;">45</div>
<div class="t" id="t37" style="left:1550px;top:436px;font-size:11px;color:#aab4be;font-weight:normal;letter-spacing:-0.295px;">Anomalies</div>
<div class="a" style="left:323px;top:487px;width:1294px;height:216px;background:#12202a;border:1px solid #1d3140;border-radius:9px;overflow:hidden"><div class="a" style="left:0;top:0;width:1294px;height:59px;background:#172733"></div><div class="a" style="left:0;top:161px;width:1294px;height:1px;background:#1f3140"></div></div>
<div class="a" style="left:340px;top:506px;width:4px;height:24px;background:#ef4444;border-radius:2px"></div>
<div class="t" id="t38" style="left:356px;top:511px;font-size:14px;color:#f2f5f8;font-weight:bold;letter-spacing:-0.313px;">Top Risky Users</div>
<div class="t" id="t39" style="left:490px;top:511px;font-size:13px;color:#9aa5b1;font-weight:normal;letter-spacing:-0.685px;">View</div>
<svg class="a" style="left:1586px;top:513px" width="12" height="8" viewBox="0 0 12 8"><path d="M1 6.5 6 1.5l5 5" fill="none" stroke="#b8c1ca" stroke-width="1.5" stroke-linecap="round" stroke-linejoin="round"/></svg>
<div class="t" id="t40" style="left:340px;top:548px;font-size:13px;color:#c3ccd5;font-weight:normal;letter-spacing:-0.295px;">john.doe@company.com</div>
<div class="t" style="left:922px;top:548px;width:40px;text-align:right;font-size:13px;color:#f4f6f8;font-weight:bold">87</div>
<div class="a" style="left:340px;top:572px;width:595px;height:6px;background:#1c2d3b;border-radius:3px"></div>
<div class="a" style="left:340px;top:572px;width:595px;height:6px;background:#6f97d2;border-radius:3px"></div>
<div class="t" style="left:922px;top:569px;width:40px;text-align:right;font-size:11px;color:#aab4be">det.</div>
<div class="t" id="t41" style="left:978px;top:548px;font-size:13px;color:#c3ccd5;font-weight:normal;letter-spacing:-0.264px;">admin@company.com</div>
<div class="t" style="left:1560px;top:548px;width:40px;text-align:right;font-size:13px;color:#f4f6f8;font-weight:bold">76</div>
<div class="a" style="left:978px;top:572px;width:595px;height:6px;background:#1c2d3b;border-radius:3px"></div>
<div class="a" style="left:978px;top:572px;width:520px;height:6px;background:#6f97d2;border-radius:3px"></div>
<div class="t" style="left:1560px;top:569px;width:40px;text-align:right;font-size:11px;color:#aab4be">det.</div>
<div class="t" id="t42" style="left:340px;top:599px;font-size:13px;color:#c3ccd5;font-weight:normal;letter-spacing:-0.165px;">external.user@partner.com</div>
<div class="t" style="left:922px;top:599px;width:40px;text-align:right;font-size:13px;color:#f4f6f8;font-weight:bold">65</div>
<div class="a" style="left:340px;top:623px;width:595px;height:6px;background:#1c2d3b;border-radius:3px"></div>
<div class="a" style="left:340px;top:623px;width:444px;height:6px;background:#6f97d2;border-radius:3px"></div>
<div class="t" style="left:922px;top:620px;width:40px;text-align:right;font-size:11px;color:#aab4be">det.</div>
<div class="t" id="t43" style="left:978px;top:599px;font-size:13px;color:#c3ccd5;font-weight:normal;letter-spacing:-0.152px;">service.account@company.com</div>
<div class="t" style="left:1560px;top:599px;width:40px;text-align:right;font-size:13px;color:#f4f6f8;font-weight:bold">54</div>
<div class="a" style="left:978px;top:623px;width:595px;height:6px;background:#1c2d3b;border-radius:3px"></div>
<div class="a" style="left:978px;top:623px;width:369px;height:6px;background:#6f97d2;border-radius:3px"></div>
<div class="t" style="left:1560px;top:620px;width:40px;text-align:right;font-size:11px;color:#aab4be">det.</div>
<div class="t" id="t44" style="left:340px;top:669px;font-size:14px;color:#f2f5f8;font-weight:bold;letter-spacing:-0.061px;">Detections by Security Category</div>
<svg class="a" style="left:1586px;top:672px" width="12" height="8" viewBox="0 0 12 8"><path d="M1 1.5 6 6.5l5-5" fill="none" stroke="#b8c1ca" stroke-width="1.5" stroke-linecap="round" stroke-linejoin="round"/></svg>
<div class="a" style="left:523px;top:502px;width:81px;height:27px;background:#dc3c3c;border-radius:7px"></div>
<div class="a" style="left:524px;top:499px;width:79px;height:82px;background:#d4d8dd;border-radius:9px;box-shadow:0 2px 8px rgba(0,0,0,.35)"></div>
<div class="a" style="left:529px;top:504px;width:69px;height:24px;background:#1f6bd9;border-radius:6px"></div>
<svg class="a" style="left:528px;top:508px" width="16" height="16" viewBox="0 0 16 16"><path d="M4.3 9.3 8 13 13.6 4.8" fill="none" stroke="#fff" stroke-width="1.7" stroke-linecap="round" stroke-linejoin="round"/></svg>
<div class="t" id="t45" style="left:547px;top:509px;font-size:13px;color:#ffffff;font-weight:normal;letter-spacing:-0.412px;">Users</div>
<div class="t" id="t46" style="left:547px;top:533px;font-size:13px;color:#2a2d33;font-weight:normal;letter-spacing:-0.583px;">Assets</div>
<div class="t" id="t47" style="left:547px;top:557px;font-size:13px;color:#2a2d33;font-weight:normal;letter-spacing:-1.391px;">IPs</div>
<div class="a" style="left:323px;top:727px;width:1294px;height:420px;background:#071a31;border:1px solid #1d3354;border-radius:9px;overflow:hidden"><div class="a" style="left:0;top:52px;width:1294px;height:1px;background:#1d3354"></div><div class="a" style="left:0;top:123px;width:1294px;height:42px;background:#0f1823;border-top:1px solid #1d3354;border-bottom:1px solid #1d3354"></div></div>
<div class="t" id="t48" style="left:340px;top:747px;font-size:14px;color:#f2f5f8;font-weight:bold;letter-spacing:-0.377px;">Anomalies</div>
<div class="a" style="left:340px;top:797px;width:1022px;height:38px;background:#0f1823;border:1px solid #23354d;border-radius:4px"></div>
<svg class="a" style="left:353px;top:808px" width="16" height="16" viewBox="0 0 16 16"><circle cx="7" cy="7" r="5.5" fill="none" stroke="#9aa5b1" stroke-width="1.5"/><path d="m11 11 3.5 3.5" stroke="#9aa5b1" stroke-width="1.5" stroke-linecap="round"/></svg>
<div class="t" id="t49" style="left:377px;top:808px;font-size:15px;color:#9aa5b1;font-weight:normal;letter-spacing:-0.377px;">Search</div>
<div class="a" style="left:1378px;top:797px;width:89px;height:38px;background:#0f1823;border:1px solid #23354d;border-radius:4px"></div>
<div class="t" id="t50" style="left:1395px;top:808px;font-size:15px;color:#e6ebf0;font-weight:normal;letter-spacing:-0.511px;">All Rules</div>
<div class="a" style="left:1483px;top:797px;width:117px;height:38px;background:#0f1823;border:1px solid #23354d;border-radius:4px"></div>
<div class="t" id="t51" style="left:1500px;top:808px;font-size:15px;color:#e6ebf0;font-weight:normal;letter-spacing:-0.133px;">Column filter</div>
<div class="t" id="t52" style="left:340px;top:865px;font-size:13px;color:#aab3bd;font-weight:normal;-webkit-text-stroke:0.45px #aab3bd;letter-spacing:-0.324px;">Rule Name</div>
<div class="t" id="t53" style="left:834px;top:865px;font-size:13px;color:#aab3bd;font-weight:normal;-webkit-text-stroke:0.45px #aab3bd;letter-spacing:-0.167px;">Anomaly ID</div>
<div class="t" id="t54" style="left:1059px;top:865px;font-size:13px;color:#aab3bd;font-weight:normal;-webkit-text-stroke:0.45px #aab3bd;letter-spacing:-0.174px;">Anomaly Grade</div>
<div class="t" id="t55" style="left:1233px;top:865px;font-size:13px;color:#aab3bd;font-weight:normal;-webkit-text-stroke:0.45px #aab3bd;letter-spacing:-0.082px;">Creation Date</div>
<div class="t" id="t56" style="left:1482px;top:865px;font-size:13px;color:#aab3bd;font-weight:normal;-webkit-text-stroke:0.45px #aab3bd;letter-spacing:-0.109px;">Severity</div>
<div class="a" style="left:324px;top:944px;width:1292px;height:1px;background:#1d3354"></div>
<div class="t" id="t57" style="left:340px;top:911px;font-size:15px;color:#e6ebf0;font-weight:normal;letter-spacing:0.086px;">unexpected-transfer-inbound-from-an-orig-...</div>
<div class="t" id="t58" style="left:834px;top:911px;font-size:15px;color:#a9b2bd;font-weight:normal;letter-spacing:0.032px;">ANOM-2025-0001</div>
<div class="t" id="t59" style="left:1059px;top:911px;font-size:15px;color:#e4e8ed;font-weight:normal;-webkit-text-stroke:0.45px #e4e8ed;letter-spacing:-0.384px;">4.73</div>
<div class="t" id="t60" style="left:1233px;top:911px;font-size:15px;color:#a9b2bd;font-weight:normal;letter-spacing:0.003px;">2025-05-15 23:15:29</div>
<div class="a" style="left:1482px;top:906px;width:66px;height:25px;background:#3a1a2e;border:1px solid #7e2a40;border-radius:13px"></div>
<div class="t" id="t61" style="left:1494.7px;top:912px;font-size:13px;color:#f26a78;font-weight:normal;-webkit-text-stroke:0.4px #f26a78;letter-spacing:0.152px;">Critical</div>
<div class="a" style="left:324px;top:996px;width:1292px;height:1px;background:#1d3354"></div>
<div class="t" id="t62" style="left:340px;top:963px;font-size:15px;color:#e6ebf0;font-weight:normal;letter-spacing:-0.023px;">unusual-tunnelizer-for-a-resp</div>
<div class="t" id="t63" style="left:834px;top:963px;font-size:15px;color:#a9b2bd;font-weight:normal;letter-spacing:0.032px;">ANOM-2025-0002</div>
<div class="t" id="t64" style="left:1059px;top:963px;font-size:15px;color:#e4e8ed;font-weight:normal;-webkit-text-stroke:0.45px #e4e8ed;letter-spacing:-0.617px;">4.18</div>
<div class="t" id="t65" style="left:1233px;top:963px;font-size:15px;color:#a9b2bd;font-weight:normal;letter-spacing:0.003px;">2025-05-15 22:48:12</div>
<div class="a" style="left:1482px;top:958px;width:52px;height:25px;background:#37241f;border:1px solid #8a4a22;border-radius:13px"></div>
<div class="t" id="t66" style="left:1494.7px;top:964px;font-size:13px;color:#f2974a;font-weight:normal;-webkit-text-stroke:0.4px #f2974a;letter-spacing:0.331px;">High</div>
<div class="a" style="left:324px;top:1048px;width:1292px;height:1px;background:#1d3354"></div>
<div class="t" id="t67" style="left:340px;top:1015px;font-size:15px;color:#e6ebf0;font-weight:normal;letter-spacing:0.155px;">unexpected-packet-count-from-an-orig-to-a-...</div>
<div class="t" id="t68" style="left:834px;top:1015px;font-size:15px;color:#a9b2bd;font-weight:normal;letter-spacing:0.032px;">ANOM-2025-0003</div>
<div class="t" id="t69" style="left:1059px;top:1015px;font-size:15px;color:#e4e8ed;font-weight:normal;-webkit-text-stroke:0.45px #e4e8ed;letter-spacing:-0.617px;">3.18</div>
<div class="t" id="t70" style="left:1233px;top:1015px;font-size:15px;color:#a9b2bd;font-weight:normal;letter-spacing:0.003px;">2025-05-15 21:32:45</div>
<div class="a" style="left:1482px;top:1010px;width:72px;height:25px;background:#37351f;border:1px solid #8a7422;border-radius:13px"></div>
<div class="t" id="t71" style="left:1494.7px;top:1016px;font-size:13px;color:#f5c518;font-weight:normal;-webkit-text-stroke:0.4px #f5c518;letter-spacing:0.319px;">Medium</div>
<div class="a" style="left:324px;top:1100px;width:1292px;height:1px;background:#1d3354"></div>
<div class="t" id="t72" style="left:340px;top:1067px;font-size:15px;color:#e6ebf0;font-weight:normal;letter-spacing:-0.119px;">excessive-authentication-spikes</div>
<div class="t" id="t73" style="left:834px;top:1067px;font-size:15px;color:#a9b2bd;font-weight:normal;letter-spacing:0.032px;">ANOM-2025-0004</div>
<div class="t" id="t74" style="left:1059px;top:1067px;font-size:15px;color:#e4e8ed;font-weight:normal;-webkit-text-stroke:0.45px #e4e8ed;letter-spacing:-0.117px;">2.88</div>
<div class="t" id="t75" style="left:1233px;top:1067px;font-size:15px;color:#a9b2bd;font-weight:normal;letter-spacing:0.003px;">2025-05-15 20:15:33</div>
<div class="a" style="left:1482px;top:1062px;width:49px;height:25px;background:#15253a;border:1px solid #33465e;border-radius:13px"></div>
<div class="t" id="t76" style="left:1494.7px;top:1068px;font-size:13px;color:#a4aebb;font-weight:normal;-webkit-text-stroke:0.4px #a4aebb;letter-spacing:-0.030px;">Low</div>
<div class="a" style="left:324px;top:1152px;width:1292px;height:1px;background:#1d3354"></div>
<div class="t" id="t77" style="left:340px;top:1119px;font-size:15px;color:#e6ebf0;font-weight:normal;letter-spacing:-0.023px;">unexpected-protocol-usage</div>
<div class="t" id="t78" style="left:834px;top:1119px;font-size:15px;color:#a9b2bd;font-weight:normal;letter-spacing:0.032px;">ANOM-2025-0005</div>
<div class="t" id="t79" style="left:1059px;top:1119px;font-size:15px;color:#e4e8ed;font-weight:normal;-webkit-text-stroke:0.45px #e4e8ed;letter-spacing:-0.284px;">1.88</div>
<div class="t" id="t80" style="left:1233px;top:1119px;font-size:15px;color:#a9b2bd;font-weight:normal;letter-spacing:0.003px;">2025-05-15 19:42:18</div>
<div class="a" style="left:1482px;top:1114px;width:49px;height:25px;background:#15253a;border:1px solid #33465e;border-radius:13px"></div>
<div class="t" id="t81" style="left:1494.7px;top:1120px;font-size:13px;color:#a4aebb;font-weight:normal;-webkit-text-stroke:0.4px #a4aebb;letter-spacing:-0.030px;">Low</div>
<div class="a" style="left:0px;top:0px;width:1px;height:1131px;background:#26394d"></div>
<div class="a" style="left:0px;top:1128px;width:240px;height:3px;background:#b9baba"></div>
<div class="a" style="left:240px;top:1128px;width:1398px;height:3px;background:#0a1017"></div>
<svg class="a" style="left:1622px;top:1112px" width="16" height="16" viewBox="0 0 16 16"><path d="M16 8.5 A12 12 0 0 1 7.5 15.5 V16 H16 Z" fill="#061a30"/><path d="M16 8.5 A12 12 0 0 1 7.5 15.5" fill="none" stroke="#26364a" stroke-width="0.8"/></svg>
<svg class="a" style="left:0px;top:1112px" width="18" height="17" viewBox="0 0 18 17"><path d="M0 0 V17 H18 V16.5 H15 A15 15 0 0 1 1 2 V0 Z" fill="#cdcece"/></svg>
</body></html>
